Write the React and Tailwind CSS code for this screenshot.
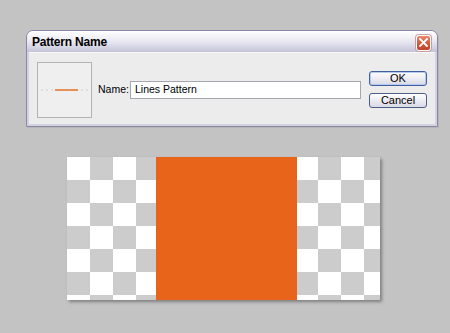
export default function App() {
  const checker =
    "bg-[conic-gradient(#cccccc_25%,#ffffff_0_50%,#cccccc_0_75%,#ffffff_0)] bg-[length:46px_46px]";
  return (
    <div
      className="w-[450px] h-[333px] bg-[#c3c3c3] overflow-hidden pt-[30px]"
      style={{ fontFamily: '"Liberation Sans", Arial, sans-serif' }}
    >
      {/* Dialog */}
      <div className="ml-[26px] w-[412px] h-[97px] flex flex-col rounded-t-[7px] border border-[#8987a4] bg-[#d3d2e2] shadow-[1px_1px_0_#b5b5b5]">
        <div className="h-[21px] flex items-center pl-[5px] pr-[6px] rounded-t-[6px] bg-linear-to-b from-[#ffffff] via-[#e9e8f1] to-[#c4c3d8]">
          <span className="font-bold text-[12px] text-black tracking-[-0.2px] mt-[1px]">Pattern Name</span>
          <div className="ml-auto mt-[2px] w-[15px] h-[16px] rounded-[3px] border border-white bg-linear-to-b from-[#e88a70] via-[#d75a3c] to-[#c0442a] flex items-center justify-center shadow-[0_0_0_1px_#c9a0a0]">
            <svg width="9" height="9" viewBox="0 0 9 9">
              <path d="M1 1 L8 8 M8 1 L1 8" stroke="white" strokeWidth="1.8" strokeLinecap="square" />
            </svg>
          </div>
        </div>
        <div className="flex-1 mx-[2px] mb-[2px] bg-[#ececec] border-t border-[#f8f8f8] flex items-start">
          {/* preview */}
          <div className="ml-[8px] mt-[9px] w-[55px] h-[56px] border border-[#b3b3b3] bg-[#efefef] flex items-center justify-center">
            <svg width="50" height="4" viewBox="0 0 50 4">
              <line x1="1" y1="2" x2="49" y2="2" stroke="#cfcfcf" strokeWidth="1" strokeDasharray="2 3" />
              <line x1="15" y1="2" x2="38" y2="2" stroke="#e8722a" strokeWidth="1.5" />
            </svg>
          </div>
          <div className="ml-[6px] mt-[28px] flex items-center">
            <span className="text-[10.5px] text-black w-[32px]">Name:</span>
            <div className="w-[231px] h-[18px] border border-[#a6a6b0] bg-white flex items-center pl-[4px]">
              <span className="text-[10.5px] text-black">Lines Pattern</span>
            </div>
          </div>
          <div className="ml-[8px] mt-[18px] flex flex-col gap-[7px]">
            <div className="w-[58px] h-[15px] rounded-[3px] border border-[#3f5f9f] bg-linear-to-b from-[#ffffff] to-[#d9d9e6] shadow-[inset_0_0_0_1px_#b6c9ee] flex items-center justify-center text-[11px] text-black">
              OK
            </div>
            <div className="w-[58px] h-[15px] rounded-[3px] border border-[#4d5d8a] bg-linear-to-b from-[#ffffff] to-[#d9d9e6] flex items-center justify-center text-[11px] text-black">
              Cancel
            </div>
          </div>
        </div>
      </div>

      {/* Canvas */}
      <div className="ml-[67px] mt-[30px] w-[313px] h-[143px] flex shadow-[2px_2px_3px_rgba(0,0,0,0.35)]">
        <div className={`w-[89px] h-full ${checker}`} />
        <div className="w-[141px] h-full bg-[#e8641b]" />
        <div className={`w-[83px] h-full ${checker} bg-[position:-2px_0]`} />
      </div>
    </div>
  );
}
